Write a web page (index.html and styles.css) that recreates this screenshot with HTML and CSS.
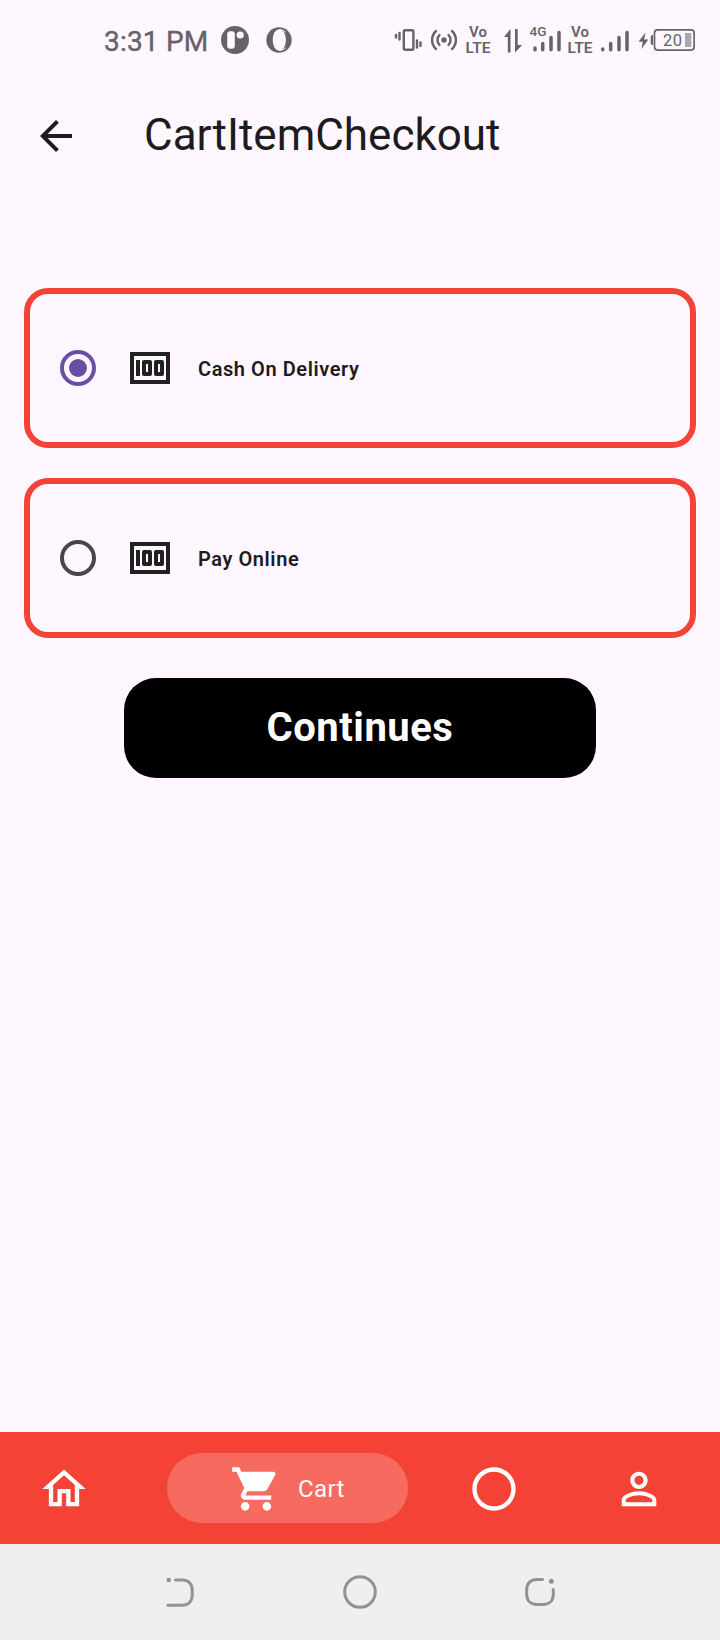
FILE: index.html
```html
<!DOCTYPE html>
<html lang="en">
<head>
<meta charset="utf-8">
<title>CartItemCheckout</title>
<link rel="stylesheet" href="styles.css">
</head>
<body>
<div class="screen">
  <div class="status">
    <span class="clock">3:31 PM</span>
    <svg class="notifications" viewBox="220 20 74 40" width="74" height="40">
      <circle cx="235" cy="40" r="14"/>
      <rect class="cut" x="227.200" y="31.200" width="7.600" height="17.600" rx="3"/>
      <circle class="cut" cx="240.200" cy="35" r="3.600"/>
      <circle cx="279" cy="40" r="12.700"/>
      <ellipse class="cut" cx="279.300" cy="40" rx="6.600" ry="10.800"/>
      <path class="slit" d="M279 29.600c2.500-.2 4.800.8 6.600 2.600M279 50.400c2.500.2 4.800-.8 6.600-2.600"/>
    </svg>
    <svg class="indicators" viewBox="390 20 310 40" width="310" height="40">
      <g class="line">
        <rect x="403.800" y="30.300" width="9.600" height="19.400" rx="1.500"/>
        <path d="M399.500 33v6.500M396 35v2.600M417 40.500v7M420.500 42.500v3.400"/>
        <path d="M439.500 35a7 7 0 0 0 0 10M448.500 35a7 7 0 0 1 0 10M436 31a12.300 12.300 0 0 0 0 18M452 31a12.300 12.300 0 0 1 0 18"/>
      </g>
      <circle cx="444" cy="40" r="2.700"/>
      <text class="volte"><tspan class="vo" x="469" y="37.400">Vo</tspan><tspan x="465.600" y="52.600">LTE</tspan></text>
      <path d="M510.500 29v23.500h-2.700V37H504zM515 29h2.700v16h4.500l-7.200 7.500z"/>
      <text class="net" x="529.500" y="35.500" textLength="17" lengthAdjust="spacingAndGlyphs">4G</text>
      <path class="bars" d="M535 48v1.800M542.700 43.500v6.300M551 37.500v12.300M559 32.500v17.300"/>
      <text class="volte"><tspan class="vo" x="571" y="37.400">Vo</tspan><tspan x="567.600" y="52.600">LTE</tspan></text>
      <path class="bars" d="M602.700 49v.8M610.700 43.500v6.300M619 37.500v12.300M627 32.500v17.300"/>
      <path d="M645.500 32.500l-7 9.300h4.300l-1.300 7.200 6.800-9.600h-4.200z"/>
      <path d="M653 35v10c-1.500 0-2.300-.8-2.300-2.300v-5.400c0-1.500.8-2.300 2.300-2.300z"/>
      <rect class="case" x="654.500" y="29.900" width="39.600" height="20.200" rx="3"/>
      <text class="level" x="663" y="46" textLength="19">20</text>
      <rect class="charge" x="685" y="33" width="6.300" height="14"/>
    </svg>
  </div>

  <header class="appbar">
    <svg viewBox="0 0 24 24" width="48" height="48"><path d="M20 11H7.830l5.590-5.590L12 4l-8 8 8 8 1.410-1.410L7.830 13H20z"/></svg>
    <h1 class="title">CartItemCheckout</h1>
  </header>

  <main class="content">
    <div class="option">
      <span class="radio selected"></span>
      <svg class="money" viewBox="0 0 24 24" width="48" height="48"><path d="M5 8h2v8H5zM12 8H9c-.55 0-1 .45-1 1v6c0 .55.45 1 1 1h3c.55 0 1-.45 1-1V9c0-.55-.45-1-1-1zm-1 6h-1v-4h1v4zM18 8h-3c-.55 0-1 .45-1 1v6c0 .55.45 1 1 1h3c.55 0 1-.45 1-1V9c0-.55-.45-1-1-1zm-1 6h-1v-4h1v4zM2 4v16h20V4H2zm2 14V6h16v12H4z"/></svg>
      <span class="label">Cash On Delivery</span>
    </div>
    <div class="option">
      <span class="radio"></span>
      <svg class="money" viewBox="0 0 24 24" width="48" height="48"><path d="M5 8h2v8H5zM12 8H9c-.55 0-1 .45-1 1v6c0 .55.45 1 1 1h3c.55 0 1-.45 1-1V9c0-.55-.45-1-1-1zm-1 6h-1v-4h1v4zM18 8h-3c-.55 0-1 .45-1 1v6c0 .55.45 1 1 1h3c.55 0 1-.45 1-1V9c0-.55-.45-1-1-1zm-1 6h-1v-4h1v4zM2 4v16h20V4H2zm2 14V6h16v12H4z"/></svg>
      <span class="label">Pay Online</span>
    </div>
    <button class="continue">Continues</button>
  </main>

  <nav class="tabs">
    <svg class="tab home" viewBox="0 0 24 24"><path d="M12 5.690l5 4.500V18h-2v-6H9v6H7v-7.810l5-4.500M12 3L2 12h3v8h6v-6h2v6h6v-8h3L12 3z"/></svg>
    <div class="active">
      <svg class="tab" viewBox="0 0 24 24"><path d="M7 18c-1.100 0-1.990.9-1.990 2S5.900 22 7 22s2-.9 2-2-.9-2-2-2zM1 2v2h2l3.600 7.590-1.350 2.450c-.16.28-.25.61-.25.96 0 1.100.9 2 2 2h12v-2H7.420c-.14 0-.25-.11-.25-.25l.03-.12.9-1.630h7.450c.75 0 1.410-.41 1.750-1.030l3.580-6.490c.08-.14.12-.31.12-.48 0-.55-.45-1-1-1H5.210l-.94-2H1zm16 16c-1.100 0-1.990.9-1.990 2s.89 2 1.990 2 2-.9 2-2-.9-2-2-2z"/></svg>
      <span class="tab-label">Cart</span>
    </div>
    <svg class="tab ring" viewBox="0 0 24 24"><path d="M12 2C6.470 2 2 6.470 2 12s4.470 10 10 10 10-4.470 10-10S17.530 2 12 2zm0 18c-4.420 0-8-3.580-8-8s3.580-8 8-8 8 3.580 8 8-3.580 8-8 8z"/></svg>
    <svg class="tab person" viewBox="0 0 24 24"><path d="M12 5.900c1.160 0 2.100.94 2.100 2.100s-.94 2.100-2.100 2.100S9.900 9.160 9.900 8s.94-2.100 2.100-2.100m0 9c2.970 0 6.100 1.460 6.100 2.100v1.100H5.900V17c0-.64 3.130-2.100 6.100-2.100M12 4C9.790 4 8 5.790 8 8s1.790 4 4 4 4-1.790 4-4-1.790-4-4-4zm0 9c-2.670 0-8 1.340-8 4v3h16v-3c0-2.660-5.330-4-8-4z"/></svg>
  </nav>

  <div class="system">
    <svg viewBox="0 0 40 40"><circle class="dot" cx="8.700" cy="8" r="2.300"/><path d="M15.500 8H22c6.500 0 10.200 4 10.200 10v5.300c0 6-3.700 10-10.200 10H8"/></svg>
    <svg viewBox="0 0 40 40"><circle cx="20" cy="20" r="15.300"/></svg>
    <svg viewBox="0 0 40 40"><circle class="dot" cx="31.300" cy="9.300" r="2.500"/><path d="M22.500 7.400H17c-6.300 0-10.300 3.800-10.300 10v5c0 6.200 4 10 10.300 10h6c6.300 0 10.300-3.800 10.300-10v-5"/></svg>
  </div>
</div>
</body>
</html>
```
FILE: styles.css
```css
body {
  margin: 0;
  font-family: Roboto, "Liberation Sans", sans-serif;
}

svg {
  display: block;
  flex: none;
}

.screen {
  display: flex;
  flex-direction: column;
  height: 1640px;
  background: #fef7ff;
  color: #1d1b20;
}

.status {
  display: flex;
  align-items: center;
  box-sizing: border-box;
  height: 80px;
  padding: 0 20px 0 104px;
  color: #666367;
  fill: #666367;
}

.clock {
  width: 116px;
  font-size: 28px;
  letter-spacing: 0.2px;
  line-height: 32px;
  padding-top: 4px;
  white-space: nowrap;
  -webkit-text-stroke: 0.4px #666367;
}

.indicators { margin-left: auto; }
.cut { fill: #fef7ff; }
.slit { fill: none; stroke: #fef7ff; stroke-width: 1; }
.line { fill: none; stroke: #666367; stroke-width: 2.4; stroke-linecap: round; }
.bars { fill: none; stroke: #666367; stroke-width: 3.5; stroke-linecap: round; }
.volte { font-size: 15.5px; font-weight: 600; }
.vo { font-size: 15px; }
.net { font-size: 13px; font-weight: 500; }
.case { fill: none; stroke: #666367; stroke-width: 1.7; }
.level { font-size: 16.5px; }
.charge { fill: #aaa6ab; }

.appbar {
  display: flex;
  align-items: center;
  height: 112px;
  padding-left: 32px;
  gap: 64px;
  fill: #1d1b20;
}

.title {
  margin: 0;
  font-size: 44px;
  font-weight: 400;
  line-height: 56px;
  padding-bottom: 2px;
}

.content {
  display: flex;
  flex: 1;
  flex-direction: column;
  gap: 30px;
  padding: 96px 24px 0;
}

.option {
  display: flex;
  align-items: center;
  box-sizing: border-box;
  height: 160px;
  padding-left: 30px;
  border: 6px solid #f44336;
  border-radius: 24px;
}

.radio {
  display: grid;
  place-items: center;
  box-sizing: border-box;
  width: 36px;
  height: 36px;
  border: 4px solid #49454f;
  border-radius: 50%;
}

.selected { border-color: #6750a4; }

.selected::before {
  content: "";
  width: 18px;
  height: 18px;
  border-radius: 50%;
  background: #6750a4;
}

.money {
  margin: 0 24px 0 30px;
  fill: #212121;
}

.label {
  font-size: 20px;
  font-weight: 600;
  letter-spacing: 0.57px;
  line-height: 24px;
  padding-top: 1px;
}

.continue {
  align-self: center;
  width: 472px;
  height: 100px;
  margin-top: 10px;
  padding: 0;
  border: 0;
  border-radius: 32px;
  background: #000;
  color: #fff;
  font: 700 40px/48px Roboto, "Liberation Sans", sans-serif;
  letter-spacing: 0.5px;
}

.tabs {
  display: flex;
  align-items: center;
  height: 112px;
  background: #f44336;
  fill: #fff;
}

.tab { width: 52px; height: 52px; margin-top: 1px; }
.home { margin-left: 38.4px; }
.ring { margin-left: 60.4px; }
.person { margin-left: 93px; }

.active {
  display: flex;
  align-items: center;
  box-sizing: border-box;
  width: 240.5px;
  height: 70px;
  margin-left: 76.900px;
  padding-left: 62.700px;
  gap: 16px;
  border-radius: 35px;
  background: #f76a60;
}

.tab-label {
  padding-top: 2px;
  color: #fff;
  font-size: 24px;
  letter-spacing: 0.4px;
}

.system {
  display: flex;
  justify-content: space-between;
  align-items: center;
  box-sizing: border-box;
  height: 96px;
  padding: 0 160px;
  background: #efefef;
}

.system svg {
  width: 40px;
  height: 40px;
  fill: none;
  stroke: #929292;
  stroke-width: 3;
  stroke-linecap: round;
}

.system .dot { fill: #929292; stroke: none; }
```
